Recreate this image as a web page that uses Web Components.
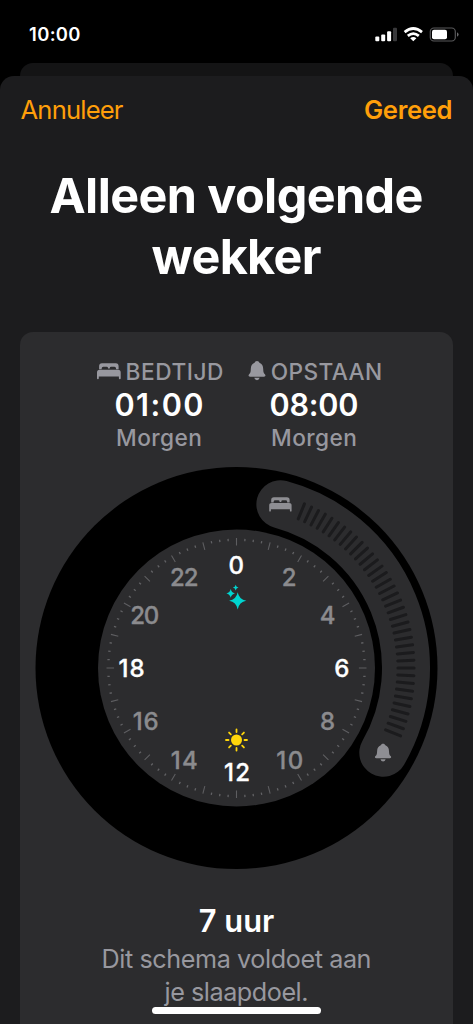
<!DOCTYPE html>
<html lang="nl">
<head>
<meta charset="utf-8">
<title>Wekker</title>
<style>
html,body{margin:0;background:#000}
body{height:1024px;overflow:hidden;font-family:Inter,"Liberation Sans",sans-serif}
</style>
</head>
<body>
<alarm-screen></alarm-screen>
<script>
const define=(name,html,setup)=>customElements.define(name,class extends HTMLElement{
  connectedCallback(){
    if(!this.shadowRoot){this.attachShadow({mode:'open'}).innerHTML=html;}
    if(setup)setup(this,this.shadowRoot);
  }
});

/* A single line of text whose tracking is tuned to a given width. */
define('fit-line','<style>:host{display:block;white-space:nowrap;width:max-content}span{display:inline-block}</style><span><slot></slot></span>',(el,root)=>{
  const s=root.querySelector('span');
  const n=el.textContent.length;
  const w=s.getBoundingClientRect().width;
  const t=+el.getAttribute('w');
  const k=(t-w)/(n-1);
  s.style.letterSpacing=k+'px';
  s.style.marginRight=-k+'px';
});

const bed='<path d="M2.1 6.2V3.2Q2.1.2 5 .2H18.8Q21.6.2 21.6 3.2V6.2H19V5.3Q19 3.7 17.4 3.7H14.2Q12.8 3.7 12.8 5V5.6H11V5Q11 3.7 9.6 3.7H6.3Q4.7 3.7 4.7 5.3V6.2Z"/><path d="M0 15.2V9.4Q0 6.7 2.7 6.7H21Q23.7 6.7 23.7 9.4V15.2Q23.7 16.2 22.8 16.2T21.9 15.2V13.6H1.8V15.2Q1.8 16.2.9 16.2T0 15.2Z"/>';
const bell='<path d="M8.5 0C9.7 0 10.6.7 10.9 1.8C13.5 2.8 14.6 5 14.7 8C14.8 11.5 15.3 12.1 16.4 13.3C17.4 14.5 17 15.7 15.5 15.7H1.5C0 15.7-.4 14.5.6 13.3C1.7 12.1 2.2 11.5 2.3 8C2.4 5 3.5 2.8 6.1 1.8C6.4.7 7.3 0 8.5 0ZM5.8 16.8H11.2Q10.5 19.2 8.5 19.2T5.8 16.8Z"/>';

define('bed-icon','<style>:host{display:block;height:17px}svg{display:block}</style><svg width="24" height="17" viewBox="0 0 24 17" fill="currentColor">'+bed+'</svg>');
define('bell-icon','<style>:host{display:block;height:20px}svg{display:block}</style><svg width="18" height="20" viewBox="0 0 17 20" fill="currentColor">'+bell+'</svg>');

define('status-bar',`<style>
:host{display:flex;justify-content:space-between;height:63px;box-sizing:border-box;padding:22px 14px 0 29px;color:#fff;font-size:18.4px;font-weight:600;line-height:25px}
svg{display:block;margin-top:4px}
</style><fit-line w="51.5">10:00</fit-line>
<svg width="84" height="18" viewBox="375 26 84 18" fill="#fff">
<rect x="375.3" y="36.6" width="4" height="4.6" rx="1"/><rect x="381.2" y="34.4" width="4" height="6.8" rx="1"/><rect x="387.1" y="31.2" width="4" height="10" rx="1"/><rect x="393" y="27.8" width="4" height="13.4" rx="1" fill="#39393b"/>
<g fill="none" stroke="#fff" stroke-width="2.7"><path d="M404.6 32.1Q413.3 24.9 422 32.1"/><path d="M407.8 35.9Q413.3 31.2 418.8 35.9"/></g><path d="M410.2 38.2Q413.3 35.8 416.4 38.2L413.3 41.3Z"/>
<rect x="430.3" y="28" width="25" height="13" rx="3.6" fill="none" stroke="#58585a" stroke-width="1.2"/><rect x="432" y="29.8" width="15" height="9.4" rx="2"/><path d="M457 32.2Q458.6 33 458.6 34.5T457 36.8Z" fill="#6a6a6c"/>
</svg>`);

define('nav-bar',`<style>
:host{display:flex;justify-content:space-between;padding:16px 20.5px 0;height:35px;line-height:35px;font-size:25.6px;color:#ff9f0a}
.done{font-weight:600}
</style><fit-line w="103">Annuleer</fit-line><fit-line class="done" w="88.5">Gereed</fit-line>`);

define('time-column',`<style>
:host{display:flex;flex-direction:column;align-items:center;color:#98989f;font-weight:500;font-size:22.7px;line-height:30px}
.head{display:flex;gap:5px;align-items:center;height:30px;padding-left:2px}
::slotted([slot=label]){padding-top:1px}
::slotted([slot=time]){color:#fff;font-size:30.6px;font-weight:600;line-height:36px;padding-top:1px}
</style><div class="head"><slot name="icon"></slot><slot name="label"></slot></div><slot name="time"></slot><slot></slot>`);

define('sleep-dial','<style>:host{display:block;width:403px;height:402px}svg{display:block}text{font-weight:500;font-size:24px;text-anchor:middle;stroke-width:.35px;stroke-linejoin:round}</style><svg width="403" height="402" viewBox="-201.5 -201 403 402"></svg>',(el,root)=>{
  const p=(r,a)=>[r*Math.sin(a*Math.PI/180),-r*Math.cos(a*Math.PI/180)].map(v=>v.toFixed(2));
  const ray=(a,r1,r2)=>'M'+p(r1,a)+'L'+p(r2,a);
  let ticks='',minor='',major='';
  for(let a=22.5;a<=112.5;a+=2.5)ticks+=ray(a,161.4,177.6);
  for(let i=0;i<96;i++){if(i%4)minor+=ray(i*3.75,127,129.4);else major+=ray(i*3.75,122.4,130);}
  let labels='';
  const w={10:27,12:26,14:27,16:26,18:26,20:29,22:28.5};
  for(let h=0;h<24;h+=2){
    const [x,y]=p(h===0?103.2:h%12?105.5:104,h*15);
    const c=h%6?'#8b8b8e':'#fff';
    labels+=`<text x="${+x+(h===20?-.5:h>8?.5:-.2)}" y="${+y+9.2}" ${h>8?`textLength="${w[h]}"`:''} fill="${c}" stroke="${c}">${h}</text>`;
  }
  const star=(x,y,r)=>{const k=r*.16;return `M${x} ${y-r}Q${x+k} ${y-k} ${x+r} ${y}Q${x+k} ${y+k} ${x} ${y+r}Q${x-k} ${y+k} ${x-r} ${y}Q${x-k} ${y-k} ${x} ${y-r}Z`;};
  let sun='';
  for(let a=0;a<360;a+=45){const q=r=>[r*Math.sin(a*Math.PI/180),72-r*Math.cos(a*Math.PI/180)];sun+='M'+q(8)+'L'+q(10.5);}
  root.querySelector('svg').innerHTML=`<circle r="201"/><circle r="138.5" fill="#2c2c2e"/>
  <path d="M${p(169.5,15)}A169.5 169.5 0 0 1 ${p(169.5,120)}" fill="none" stroke="#2c2c2e" stroke-width="48" stroke-linecap="round"/>
  <g fill="none" stroke-linecap="round"><path d="${ticks}" stroke="#1b1b1d" stroke-width="3"/></g>
  <path d="${minor}" stroke="#626265" stroke-width="1.3"/><path d="${major}" stroke="#5e5e61" stroke-width="1.1"/>
  ${labels}
  <path d="${star(1.2,-67.2,8.6)}${star(-5.8,-74.6,4.3)}${star(-.8,-80.4,2.8)}" fill="#00d5d0"/>
  <circle cy="72" r="5.5" fill="#ffd60a"/><path d="${sun}" stroke="#ffd60a" stroke-width="1.8" stroke-linecap="round"/>
  <g fill="#8e8e93"><g transform="translate(32.7 -171) scale(.945 .9)">${bed}</g><g transform="translate(138.4 75.7) scale(.96 .93)">${bell}</g></g>`;
});

define('sleep-card',`<style>
:host{display:flex;flex-direction:column;align-items:center;width:433px;height:692px;background:#2c2c2e;border-radius:13px 13px 0 0;box-sizing:border-box;padding-top:24px}
.times{display:grid;grid-template-columns:155px 155px;justify-content:center;height:96px}
sleep-dial{margin-top:15px;flex:none}
.total{margin-top:32px;color:#fff;font-size:30.8px;font-weight:600;line-height:40px}
.note{display:flex;flex-direction:column;align-items:center;margin-top:2px;font-size:25.2px;line-height:33px;color:#98989f}
</style>
<div class="times">
<time-column><bed-icon slot="icon"></bed-icon><fit-line slot="label" w="98">BEDTIJD</fit-line><fit-line slot="time" w="89">01:00</fit-line><fit-line w="86">Morgen</fit-line></time-column>
<time-column><bell-icon slot="icon"></bell-icon><fit-line slot="label" w="111.5">OPSTAAN</fit-line><fit-line slot="time" w="89">08:00</fit-line><fit-line w="86">Morgen</fit-line></time-column>
</div>
<sleep-dial></sleep-dial>
<fit-line class="total" w="75.5">7 uur</fit-line>
<div class="note"><fit-line w="270">Dit schema voldoet aan</fit-line><fit-line w="144">je slaapdoel.</fit-line></div>`);

define('modal-sheet',`<style>
:host{display:flex;flex-direction:column;height:948px;background:#1c1c1e;border-radius:14px 14px 0 0;overflow:hidden}
</style><slot></slot>`);

define('alarm-screen',`<style>
:host{display:block;width:473px;height:1024px;position:relative;overflow:hidden;background:#000}
.behind{height:13px;margin:0 20px;background:#141415;border-radius:13px 13px 0 0}
h1{margin:38px 0 0;display:flex;flex-direction:column;align-items:center;color:#fff;font-size:48.5px;font-weight:700;line-height:61px}
sleep-card{margin:45px auto 0;flex:none}
.home{position:absolute;left:152px;top:1007px;width:169px;height:6.6px;border-radius:4px;background:#fff}
</style>
<status-bar></status-bar>
<div class="behind"></div>
<modal-sheet>
<nav-bar></nav-bar>
<h1><fit-line w="374">Alleen volgende</fit-line><fit-line w="170">wekker</fit-line></h1>
<sleep-card></sleep-card>
</modal-sheet>
<div class="home"></div>`);
</script>
</body>
</html>
